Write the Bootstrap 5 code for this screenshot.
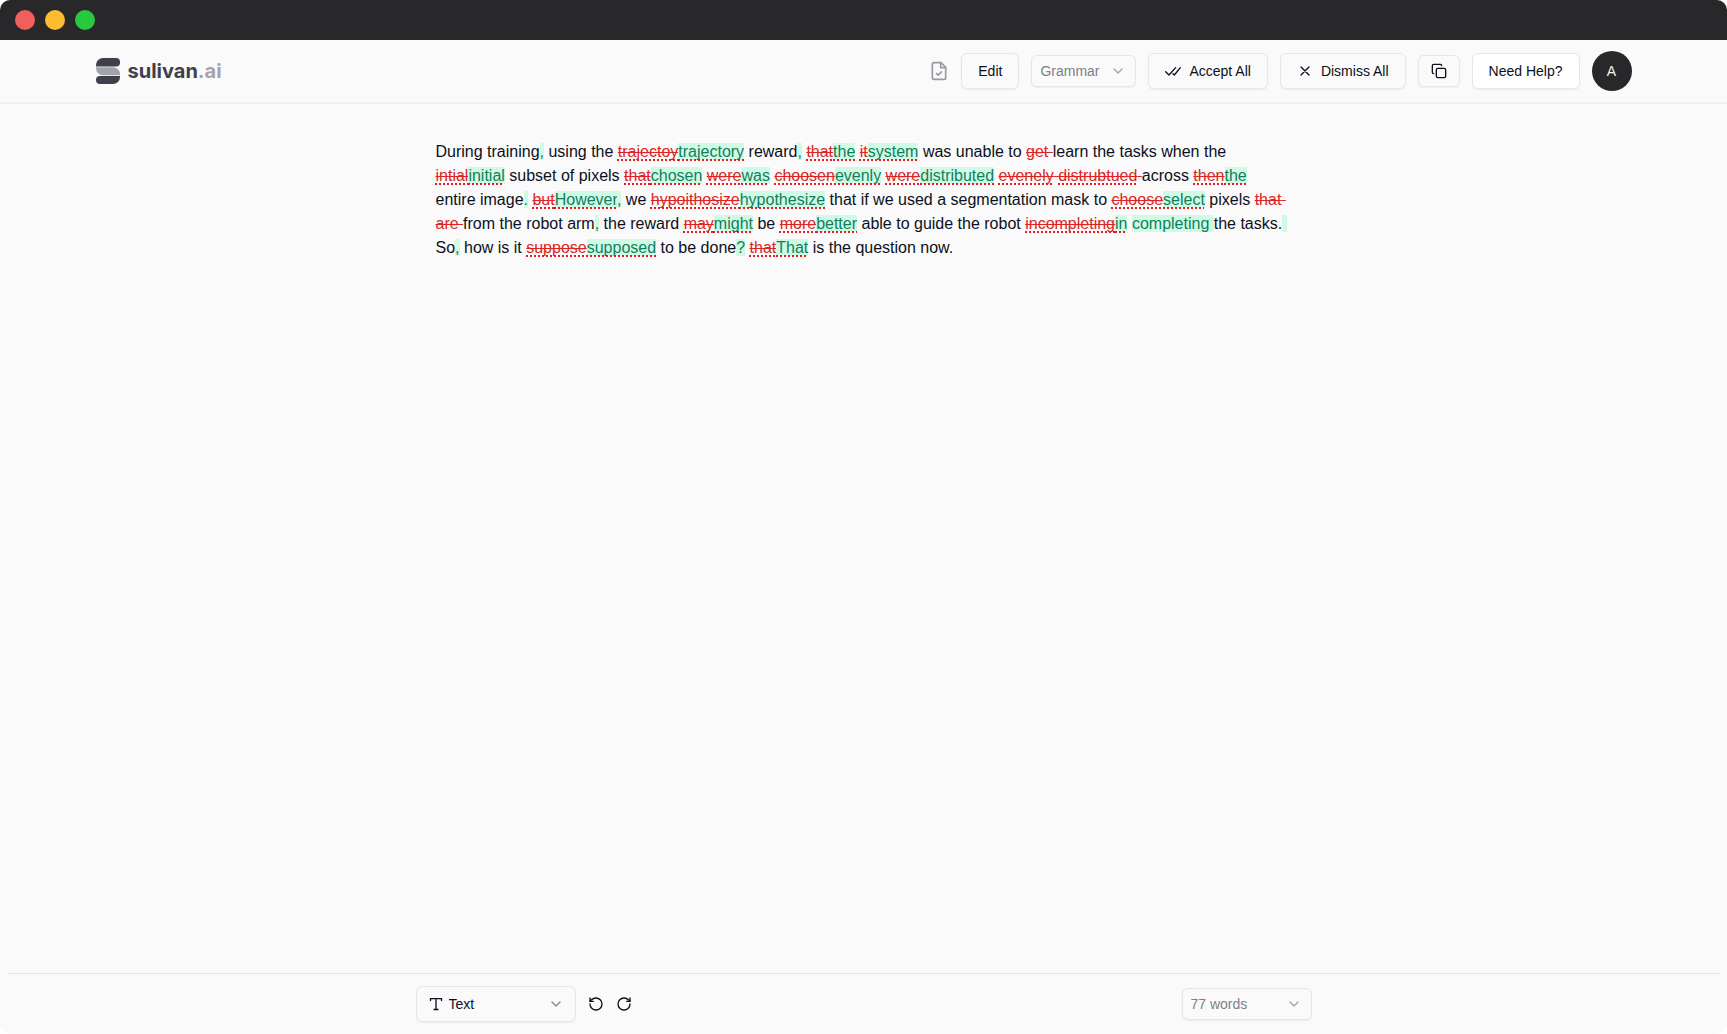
<!DOCTYPE html>
<html lang="en">
<head>
<meta charset="utf-8">
<meta name="viewport" content="width=device-width, initial-scale=1">
<title>sulivan.ai</title>
<link href="https://cdn.jsdelivr.net/npm/bootstrap@5.3.0/dist/css/bootstrap.min.css" rel="stylesheet">
<style>
  html { background: #fff; }
  body { font-family: "Liberation Sans", Arial, sans-serif; font-size: 14px; line-height: 20px; color: #0b1020; background: #fff; }
  .app-window { background: #fafafa; border-radius: 10px; overflow: hidden; }
  .title-bar { background: #28282a; height: 40px; padding: 0 15px; gap: 10px; }
  .dot { width: 20px; height: 20px; border-radius: 50%; }
  .dot-close { background: #f05f5c; }
  .dot-min { background: #fdbc30; }
  .dot-max { background: #28c840; }
  .top-bar { border-bottom: 2px solid #efeff5; padding: 11px 0; }
  .bar-inner { max-width: 1536px; }
  .brand { font-family: Inter, sans-serif; font-weight: 700; font-size: 20px; line-height: 24px; color: #3e404b; gap: 8px; }
  .brand:hover { color: #3e404b; }
  .brand .tld { color: #a3a4aa; }
  .tools { gap: 12px; }
  svg { flex: none; }
  .line-icon { fill: none; stroke: currentColor; stroke-width: 2; stroke-linecap: round; stroke-linejoin: round; }
  .tool-btn, .tool-select { font-size: 14px; line-height: 20px; border: 1px solid #e5e5f0; border-radius: 6px; color: #0b1020; background-color: #fafafa; box-shadow: 0 1px 2px rgba(30, 30, 90, .06); }
  .tool-btn { height: 36px; padding: 7px 16px; gap: 8px; }
  .tool-btn:hover { background-color: #f1f1f5; border-color: #e5e5f0; }
  .tool-btn.icon-only { height: 32px; padding: 5px 12px; }
  .tool-btn.solid { background: #fff; }
  .tool-select { height: 32px; padding: 5px 8px; background-image: none; }
  .tool-select.muted { color: #7c7f88; }
  .select-box > .chevron { position: absolute; top: 50%; right: 10px; transform: translateY(-50%); pointer-events: none; color: #a3a5ac; }
  .mode-select { width: 105px; }
  .words-select { width: 130px; }
  .block-select { width: 160px; }
  .block-select .tool-select { height: 36px; padding: 7px 32px; }
  .block-select > .chevron { right: 12px; color: #85878e; }
  .block-select > .lead-icon { position: absolute; top: 50%; left: 12px; transform: translateY(-50%); pointer-events: none; }
  .avatar { width: 40px; height: 40px; background: #28282a; color: #f4f4f5; }
  .sheet { max-width: 896px; }
  .editor { font-size: 16px; line-height: 24px; padding: 36px 24px 0 20px; white-space: pre-wrap; outline: 0; }
  .editor del { color: #dc2626; text-decoration: line-through; }
  .editor ins { color: #0e7f5c; background: #d1fae5; text-decoration: none; }
  .editor .typo { text-decoration: underline dotted #e11d1d 2px; text-underline-offset: 2px; text-decoration-skip-ink: none; }
  .bottom-bar { border-top: 1px solid #e4e4ee; margin: 0 7px; padding: 12px 0; }
  .history-btn { color: #0b1020; }
</style>
<script src="https://cdn.jsdelivr.net/npm/bootstrap@5.3.0/dist/js/bootstrap.bundle.min.js"></script>
</head>
<body>
<div class="app-window d-flex flex-column min-vh-100">
  <div class="title-bar d-flex align-items-center">
    <span class="dot dot-close"></span><span class="dot dot-min"></span><span class="dot dot-max"></span>
  </div>

  <header class="top-bar">
    <div class="bar-inner mx-auto d-flex align-items-center justify-content-between">
      <a href="#" class="brand d-flex align-items-center text-decoration-none">
        <svg width="24" height="26" viewBox="0 0 24 26" aria-hidden="true">
          <path d="M0 8.500V7a7 7 0 0 1 7-7h13a4 4 0 0 1 4 4v.5a4 4 0 0 1-4 4z" fill="#3e404b"/>
          <path d="M0 9.200h17a7 7 0 0 1 7 7v1H7a7 7 0 0 1-7-7z" fill="#a3a4aa"/>
          <path d="M24 18v1a7 7 0 0 1-7 7H4a4 4 0 0 1-4-4 4 4 0 0 1 4-4z" fill="#3e404b"/>
        </svg>
        <span>sulivan<span class="tld">.ai</span></span>
      </a>
      <div class="tools d-flex align-items-center">
        <svg class="line-icon" width="20" height="20" viewBox="0 0 24 24" color="#999aa1" aria-hidden="true"><path d="M14.500 2H6a2 2 0 0 0-2 2v16a2 2 0 0 0 2 2h12a2 2 0 0 0 2-2V7.500z"/><path d="M14 2v6h6M9 15l2 2 4-4"/></svg>
        <button type="button" class="btn tool-btn">Edit</button>
        <div class="select-box mode-select position-relative">
          <select class="form-select tool-select muted" aria-label="Mode"><option>Grammar</option></select>
          <svg class="line-icon chevron" width="16" height="16" viewBox="0 0 24 24" aria-hidden="true"><path d="m6 9 6 6 6-6"/></svg>
        </div>
        <button type="button" class="btn tool-btn d-flex align-items-center">
          <svg class="line-icon" width="16" height="16" viewBox="0 0 24 24" aria-hidden="true"><path d="M1 13l5 5L16 7M12 16l2 2L23 7"/></svg>
          Accept All</button>
        <button type="button" class="btn tool-btn d-flex align-items-center">
          <svg class="line-icon" width="16" height="16" viewBox="0 0 24 24" aria-hidden="true"><path d="M18 6 6 18M6 6l12 12"/></svg>
          Dismiss All</button>
        <button type="button" class="btn tool-btn icon-only d-flex align-items-center" aria-label="Copy">
          <svg class="line-icon" width="16" height="16" viewBox="0 0 24 24" aria-hidden="true"><rect x="8" y="8" width="14" height="14" rx="2"/><path d="M4 16c-1.100 0-2-.9-2-2V4c0-1.100.9-2 2-2h10c1.100 0 2 .9 2 2"/></svg>
        </button>
        <button type="button" class="btn tool-btn solid">Need Help?</button>
        <button type="button" class="btn avatar rounded-circle border-0 p-0 d-flex align-items-center justify-content-center"><small>A</small></button>
      </div>
    </div>
  </header>

  <main class="flex-grow-1">
    <div class="sheet mx-auto">
      <div class="editor" contenteditable="true" spellcheck="false" role="textbox" aria-label="Document">During training<ins>,</ins> using the <span class="typo"><del>trajectoy</del><ins>trajectory</ins></span> reward<ins>,</ins> <span class="typo"><del>that</del><ins>the</ins></span> <span class="typo"><del>it</del><ins>system</ins></span> was unable to <del>get </del>learn the tasks when the <span class="typo"><del>intial</del><ins>initial</ins></span> subset of pixels <span class="typo"><del>that</del><ins>chosen</ins></span> <span class="typo"><del>were</del><ins>was</ins></span> <span class="typo"><del>choosen</del><ins>evenly</ins></span> <span class="typo"><del>were</del><ins>distributed</ins></span> <del><span class="typo">evenely</span> <span class="typo">distrubtued</span> </del>across <span class="typo"><del>then</del><ins>the</ins></span> entire image<ins>.</ins> <span class="typo"><del>but</del><ins>However</ins></span><ins>,</ins> we <span class="typo"><del>hypoithosize</del><ins>hypothesize</ins></span> that if we used a segmentation mask to <span class="typo"><del>choose</del><ins>select</ins></span> pixels <del>that are </del>from the robot arm<ins>,</ins> the reward <span class="typo"><del>may</del><ins>might</ins></span> be <span class="typo"><del>more</del><ins>better</ins></span> able to guide the robot <span class="typo"><del>incompleting</del><ins>in</ins></span> <ins>completing </ins>the tasks.<ins> </ins>So<ins>,</ins> how is it <span class="typo"><del>suppose</del><ins>supposed</ins></span> to be done<ins>?</ins> <span class="typo"><del>that</del><ins>That</ins></span> is the question now.</div>
    </div>
  </main>

  <footer class="bottom-bar">
    <div class="sheet mx-auto d-flex align-items-center justify-content-between">
      <div class="d-flex align-items-center gap-2">
        <div class="select-box block-select position-relative">
          <svg class="lead-icon" width="16" height="16" viewBox="0 0 16 16" fill="none" stroke="currentColor" stroke-width="1.300" aria-hidden="true"><path d="M2.500 5V2.600h11V5M8 2.600v11M5.500 13.500h5"/></svg>
          <select class="form-select tool-select" aria-label="Block type"><option>Text</option></select>
          <svg class="line-icon chevron" width="16" height="16" viewBox="0 0 24 24" aria-hidden="true"><path d="m6 9 6 6 6-6"/></svg>
        </div>
        <div class="d-flex align-items-center">
          <button type="button" class="btn history-btn border-0 d-flex p-1 me-1" aria-label="Undo"><svg class="line-icon" width="16" height="16" viewBox="0 0 24 24" aria-hidden="true"><path d="M3 12a9 9 0 1 0 9-9 9.750 9.750 0 0 0-6.740 2.740L3 8"/><path d="M3 3v5h5"/></svg></button>
          <button type="button" class="btn history-btn border-0 d-flex p-1" aria-label="Redo"><svg class="line-icon" width="16" height="16" viewBox="0 0 24 24" aria-hidden="true"><path d="M21 12a9 9 0 1 1-9-9c2.520 0 4.930 1 6.740 2.740L21 8"/><path d="M21 3v5h-5"/></svg></button>
        </div>
      </div>
      <div class="select-box words-select position-relative">
        <select class="form-select tool-select muted" aria-label="Count"><option>77 words</option></select>
        <svg class="line-icon chevron" width="16" height="16" viewBox="0 0 24 24" aria-hidden="true"><path d="m6 9 6 6 6-6"/></svg>
      </div>
    </div>
  </footer>
</div>
</body>
</html>
